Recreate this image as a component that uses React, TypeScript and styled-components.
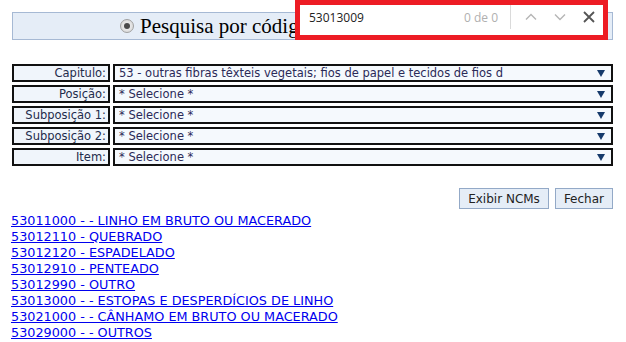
import styled, { createGlobalStyle } from 'styled-components';

const GlobalStyle = createGlobalStyle`
	html, body {
		margin: 0;
		padding: 0;
		background: #ffffff;
	}
	body {
		font-family: 'DejaVu Sans', Verdana, sans-serif;
	}
`;

const Page = styled.div`
	position: relative;
	width: 626px;
	height: 342px;
	overflow: hidden;
	padding: 12px 13px 0 12px;
	box-sizing: border-box;
`;

const Header = styled.div`
	height: 28px;
	box-sizing: border-box;
	background-color: #e5edf7;
	border: 1px solid #a6b9d4;
	display: flex;
	align-items: center;
	padding-left: 107px;
	gap: 6px;
	font-family: 'Liberation Serif', 'Times New Roman', serif;
	font-size: 21px;
	color: #000;
	white-space: nowrap;
`;

const Radio = styled.span`
	width: 14px;
	height: 14px;
	border-radius: 50%;
	box-sizing: border-box;
	border: 1px solid #a0a0a0;
	background: radial-gradient(circle, #f6f6f6 0%, #d2d2d2 100%);
	display: flex;
	align-items: center;
	justify-content: center;

	&::after {
		content: '';
		width: 6px;
		height: 6px;
		border-radius: 50%;
		background: #4a4a4a;
	}
`;

const Form = styled.div`
	margin-top: 24px;
	display: flex;
	flex-direction: column;
	gap: 3px;
	width: 601px;
`;

const Row = styled.div`
	display: grid;
	grid-template-columns: 98px 1fr;
	gap: 3px;
	height: 18px;
`;

const Label = styled.div`
	box-sizing: border-box;
	border: 2px solid #111;
	background: #f0f5fb;
	font-size: 11.5px;
	color: #1f2c4c;
	text-align: right;
	padding-right: 2px;
	line-height: 14px;
	white-space: nowrap;
`;

const Select = styled.div`
	box-sizing: border-box;
	border: 2px solid #111;
	background: #f5f9fd;
	font-size: 11.5px;
	color: #2b2a58;
	display: flex;
	align-items: center;
	justify-content: space-between;
	padding: 0 6px 0 4px;
	white-space: nowrap;
	overflow: hidden;
`;

const Arrow = styled.svg`
	width: 8px;
	height: 8px;
	flex: none;
`;

const Buttons = styled.div`
	margin-top: 22px;
	display: flex;
	justify-content: flex-end;
	gap: 6px;
	width: 601px;
`;

const Button = styled.button`
	height: 21px;
	padding: 0 8px;
	background: #e5edf7;
	border: 1px solid #93a9c7;
	border-radius: 0;
	font-family: 'DejaVu Sans', Verdana, sans-serif;
	font-size: 12px;
	color: #222;
	cursor: pointer;
`;

const Results = styled.div`
	margin-top: 4px;
	margin-left: -1px;
	display: flex;
	flex-direction: column;
`;

const ResultLink = styled.a`
	font-size: 12.8px;
	line-height: 16px;
	color: #0000ee;
	text-decoration: underline;
	white-space: nowrap;
	width: max-content;
`;

const FindBar = styled.div`
	position: absolute;
	top: 0;
	left: 295px;
	width: 313px;
	height: 40px;
	box-sizing: border-box;
	border: 5px solid #ed1c24;
	background: #fff;
	display: flex;
	align-items: center;
	padding: 0 0 6px 9px;
	font-family: 'Open Sans', 'Noto Sans', sans-serif;
	font-size: 12px;
`;

const FindInput = styled.span`
	flex: 1;
	color: #222;
`;

const FindCount = styled.span`
	color: #b0b0b0;
	padding-right: 12px;
`;

const Divider = styled.span`
	width: 1px;
	height: 24px;
	background: #dadada;
`;

const IconButton = styled.span<{ $first?: boolean }>`
	width: 29px;
	display: flex;
	justify-content: center;
	align-items: center;
	margin-left: ${(p) => (p.$first ? '5px' : '0')};
`;

const fields = [
	{ label: 'Capitulo:', value: '53 - outras fibras têxteis vegetais; fios de papel e tecidos de fios d' },
	{ label: 'Posição:', value: '* Selecione *' },
	{ label: 'Subposição 1:', value: '* Selecione *' },
	{ label: 'Subposição 2:', value: '* Selecione *' },
	{ label: 'Item:', value: '* Selecione *' },
];

const results = [
	'53011000 - - LINHO EM BRUTO OU MACERADO',
	'53012110 - QUEBRADO',
	'53012120 - ESPADELADO',
	'53012910 - PENTEADO',
	'53012990 - OUTRO',
	'53013000 - - ESTOPAS E DESPERDÍCIOS DE LINHO',
	'53021000 - - CÂNHAMO EM BRUTO OU MACERADO',
	'53029000 - - OUTROS',
];

function App() {
	return (
		<>
			<GlobalStyle />
			<Page>
				<Header>
					<Radio />
					<span>Pesquisa por código</span>
				</Header>
				<Form>
					{fields.map((f) => (
						<Row key={f.label}>
							<Label>{f.label}</Label>
							<Select>
								<span>{f.value}</span>
								<Arrow viewBox="0 0 8 8">
									<path d="M0 1 L8 1 L4 8 Z" fill="#163a6b" />
								</Arrow>
							</Select>
						</Row>
					))}
				</Form>
				<Buttons>
					<Button>Exibir NCMs</Button>
					<Button>Fechar</Button>
				</Buttons>
				<Results>
					{results.map((r) => (
						<ResultLink key={r} href="#">
							{r}
						</ResultLink>
					))}
				</Results>
				<FindBar>
					<FindInput>53013009</FindInput>
					<FindCount>0 de 0</FindCount>
					<Divider />
					<IconButton $first>
						<svg width="14" height="14" viewBox="0 0 14 14">
							<path d="M2 9.5 L7 4.5 L12 9.5" fill="none" stroke="#b5b5b5" strokeWidth="1.4" />
						</svg>
					</IconButton>
					<IconButton>
						<svg width="14" height="14" viewBox="0 0 14 14">
							<path d="M2 4.5 L7 9.5 L12 4.5" fill="none" stroke="#b5b5b5" strokeWidth="1.4" />
						</svg>
					</IconButton>
					<IconButton>
						<svg width="14" height="14" viewBox="0 0 14 14">
							<path d="M2 2 L12 12 M12 2 L2 12" fill="none" stroke="#555" strokeWidth="1.8" />
						</svg>
					</IconButton>
				</FindBar>
			</Page>
		</>
	);
}

export default App;
